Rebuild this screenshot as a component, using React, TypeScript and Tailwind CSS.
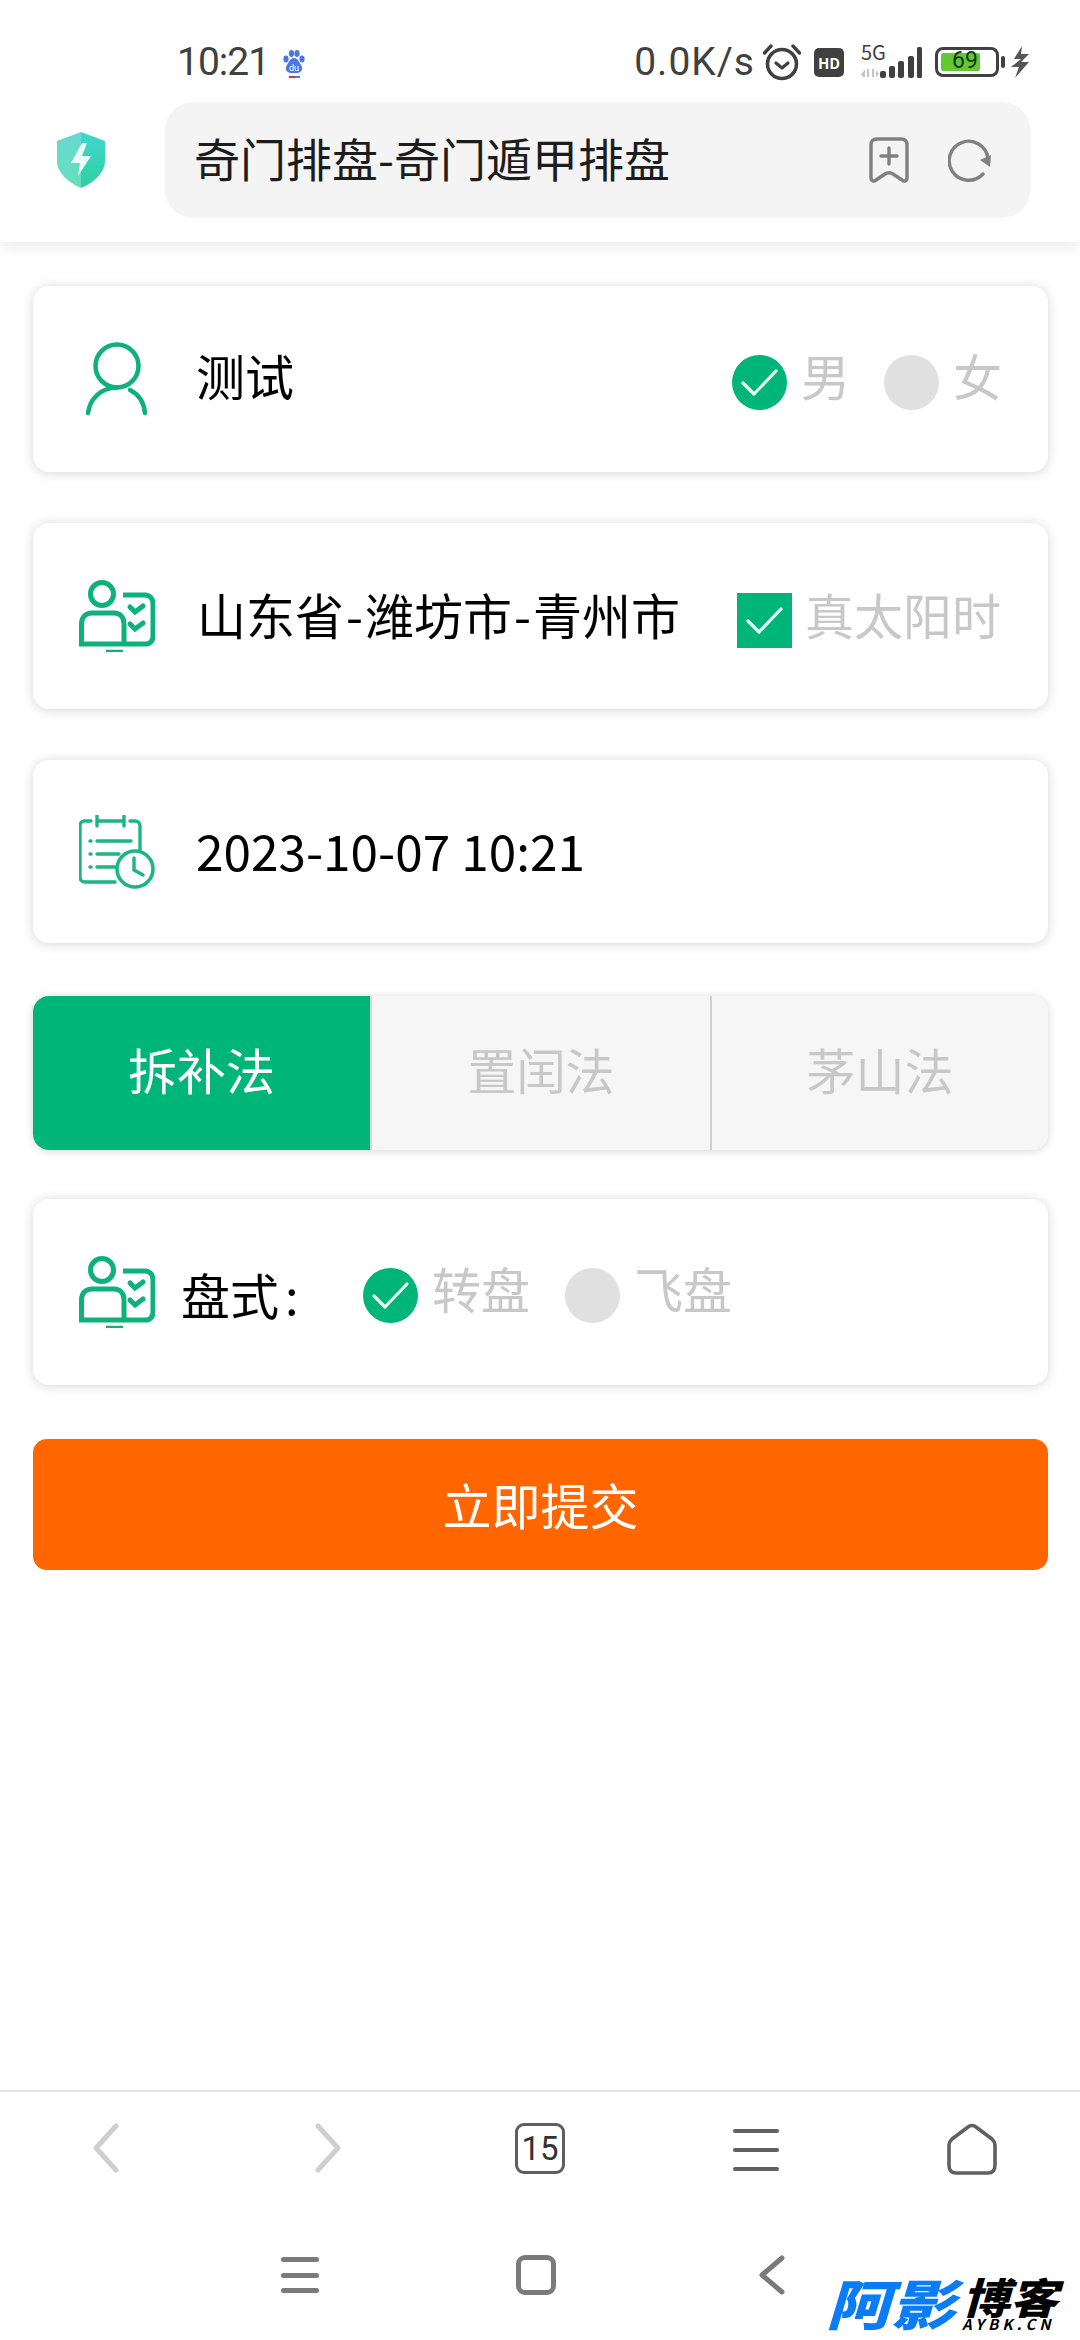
import React from 'react'

const font = { fontFamily: '"Noto Sans CJK SC", "Noto Sans", sans-serif' }

const Check = ({ className }: { className?: string }) => (
  <svg viewBox="0 0 55 55" className={className} fill="none">
    <path d="M11 28 L22 39 L44 16" stroke="#e8fff6" strokeWidth="3.2" strokeLinecap="round" strokeLinejoin="round" />
  </svg>
)

const Radio = ({ on, label }: { on?: boolean; label: string }) => (
  <div className="flex items-center gap-[14px]">
    <span className={on ? 'mt-[6px] block h-[55px] w-[55px] rounded-full bg-[#00b578]' : 'mt-[6px] block h-[55px] w-[55px] rounded-full bg-[#e0e0e0]'}>
      {on && <Check className="h-[55px] w-[55px]" />}
    </span>
    <span className="pb-[9px] text-[49px] leading-none text-[#c8c8c8]">{label}</span>
  </div>
)

const Card = ({ className, children }: { className?: string; children: React.ReactNode }) => (
  <div className={`flex items-center rounded-[16px] bg-white shadow-[0_1px_12px_rgba(0,0,0,0.17)] ${className ?? ''}`}>
    {children}
  </div>
)

const PersonIcon = () => (
  <svg viewBox="0 0 66 74" className="h-[74px] w-[66px]" fill="none" stroke="#0cb27a" strokeWidth="4.5" strokeLinecap="round">
    <circle cx="33" cy="24" r="21.5" />
    <path d="M4 71 C6 56 17 46 33 45.5" />
    <path d="M46 48 C54 52 60 60 61 71" />
  </svg>
)

const PersonCheckIcon = () => (
  <svg viewBox="0 0 76 72" className="h-[72px] w-[76px]" fill="none" stroke="#0cb27a" strokeWidth="5">
    <circle cx="23" cy="14" r="11.5" />
    <path d="M2.5 64 V44 C2.5 37 7 33 13 33 H35 C41 33 45 37 45 44 V64" />
    <path d="M44 15 H66 C71 15 74 19 74 24 V56 C74 61 71 64 66 64 H0" />
    <path d="M51 27 L56 32 L64 26" strokeLinecap="round" />
    <path d="M51 44 L56 49 L64 43" strokeLinecap="round" />
    <path d="M27 71 H44" strokeWidth="2.5" />
  </svg>
)

const CalendarIcon = () => (
  <svg viewBox="0 0 76 74" className="h-[74px] w-[76px]" fill="none" stroke="#1ab684" strokeWidth="3.4" strokeLinecap="round">
    <path d="M12 6 H5 C2 6 1 9 1 11 V62 C1 65 3 67 6 67 H36" />
    <path d="M18 1 V11 M18 6 H44 M45 1 V11 M51 6 H56 C59 6 61 8 61 11 V36" />
    <path d="M18 26 H52 M18 39 H40 M18 52 H36" />
    <path d="M11 26 H12 M11 39 H12 M11 52 H12" />
    <circle cx="56" cy="54" r="18" strokeWidth="3.6" />
    <path d="M55 43 V55 L64 60" />
  </svg>
)

const StatusIcons = () => (
  <div className="flex items-center">
    <svg viewBox="0 0 38 38" className="ml-[8px] h-[38px] w-[38px]" fill="none" stroke="#404040">
      <circle cx="19" cy="21" r="14.5" strokeWidth="3.6" />
      <path d="M13 20 L19 25 L25 20" strokeWidth="3.2" strokeLinecap="round" strokeLinejoin="round" />
      <path d="M1.5 10 L8 3 M36.5 10 L30 3" strokeWidth="3.4" strokeLinecap="round" />
    </svg>
    <span className="ml-[13px] flex h-[29px] w-[30px] items-center justify-center rounded-[5px] bg-[#404040] text-[15px] font-bold leading-none text-white">HD</span>
    <div className="relative ml-[17px] h-[32px] w-[62px]">
      <span className="absolute left-0 top-[-5px] text-[20px] leading-[22px] text-[#404040]">5G</span>
      <svg viewBox="0 0 62 32" className="absolute inset-0 h-[32px] w-[62px]">
        <path d="M0 28 L4 24 V31 H2 Z M6 23 H8 V31 H6 Z" fill="#c4c4c4" />
        <path d="M11 23 H13 V31 H11 Z M15 24 L18 28 L15 31 Z" fill="#c4c4c4" />
        <rect x="19" y="25" width="6" height="7" rx="2" fill="#404040" />
        <rect x="28" y="20" width="6" height="12" rx="2" fill="#404040" />
        <rect x="37" y="15" width="6" height="17" rx="2" fill="#404040" />
        <rect x="47" y="10" width="6" height="22" rx="2" fill="#404040" />
        <rect x="56" y="1" width="5" height="31" rx="1.5" fill="#404040" />
      </svg>
    </div>
    <div className="relative ml-[12px] h-[30px] w-[64px] rounded-[8px] border-[3px] border-[#404040]">
      <div className="ml-[3px] mt-[3px] h-[18px] w-[39px] rounded-[2px] bg-[#64c832]" />
      <span className="absolute left-[14px] top-[-2px] text-[23px] leading-[26px] text-[#11380a]" style={{ fontFamily: 'Roboto, sans-serif' }}>69</span>
    </div>
    <span className="ml-[2px] block h-[12px] w-[4px] rounded-[2px] bg-[#404040]" />
    <svg viewBox="0 0 18 32" className="ml-[6px] h-[32px] w-[18px]">
      <path d="M11 0 L3 13 H10 L0 21 H8 L4 32 L18 16 H10 L18 8 H10 Z" fill="#555555" />
    </svg>
  </div>
)

export default function App() {
  return (
    <div className="relative flex h-[2340px] w-[1080px] flex-col overflow-hidden bg-white" style={font}>
      <header className="relative z-10 h-[242px] bg-white shadow-[0_4px_14px_rgba(0,0,0,0.09)]">
        <div className="flex h-[102px] items-start justify-between pl-[177px] pr-[51px] pt-[38px]">
          <div className="flex items-center">
            <span className="text-[39px] leading-[48px] tracking-[-1px] text-[#404040]" style={{ fontFamily: 'Roboto, sans-serif' }}>10:21</span>
            <svg viewBox="0 0 24 30" className="ml-[13px] mt-[2px] h-[30px] w-[24px]">
              <ellipse cx="4" cy="11" rx="2.6" ry="3.4" fill="#4a78e8" />
              <ellipse cx="9.5" cy="5.5" rx="2.6" ry="3.4" fill="#4a78e8" />
              <ellipse cx="15" cy="5.5" rx="2.6" ry="3.4" fill="#4a78e8" />
              <ellipse cx="20" cy="11" rx="2.6" ry="3.4" fill="#4a78e8" />
              <path d="M12 10 C16 10 17 14 19 17 C22 21 19 25 15 25 H9 C5 25 2 21 5 17 C7 14 8 10 12 10 Z" fill="#4a78e8" />
              <text x="12" y="23" textAnchor="middle" fontSize="9" fill="#ffffff" fontFamily="Roboto, sans-serif">du</text>
              <rect x="7" y="28" width="6" height="2" fill="#c0394b" />
              <rect x="13" y="28" width="5" height="2" fill="#4a78e8" />
            </svg>
          </div>
          <div className="flex items-center">
            <span className="text-[39px] leading-[48px] tracking-[1px] text-[#404040]" style={{ fontFamily: 'Roboto, sans-serif' }}>0.0K/s</span>
            <StatusIcons />
          </div>
        </div>
        <div className="flex items-center pl-[57px] pr-[50px]">
          <svg viewBox="0 0 48 56" className="h-[56px] w-[48px]">
            <defs>
              <linearGradient id="shieldL" x1="0" y1="0" x2="0" y2="1">
                <stop offset="0" stopColor="#66d9d4" />
                <stop offset="1" stopColor="#66e0b8" />
              </linearGradient>
              <linearGradient id="shieldR" x1="0" y1="0" x2="0" y2="1">
                <stop offset="0" stopColor="#40d6cf" />
                <stop offset="1" stopColor="#2fd0a0" />
              </linearGradient>
            </defs>
            <path d="M24 0 L0 9 V29 C0 41 12 51 24 56 Z" fill="url(#shieldL)" />
            <path d="M24 0 L48 9 V29 C48 41 36 51 24 56 Z" fill="url(#shieldR)" />
            <path d="M25 11 L14 31 H23 L21 44 L34 24 H25 L30 11 Z" fill="#eafff8" />
          </svg>
          <div className="ml-[60px] flex h-[116px] flex-1 items-center rounded-[28px] bg-[#f4f4f4] pl-[29px]">
            <span className="pb-[6px] text-[46px] leading-none text-[#1c1c1c]">奇门排盘-奇门遁甲排盘</span>
            <svg viewBox="0 0 40 46" className="ml-auto h-[46px] w-[40px]" fill="none" stroke="#808080" strokeWidth="3.4" strokeLinecap="round" strokeLinejoin="round">
              <path d="M8 2 H32 C36 2 38 4 38 8 V41 C38 44 35 45 33 43 L24 37 C21 35 19 35 16 37 L7 43 C5 45 2 44 2 41 V8 C2 4 4 2 8 2 Z" />
              <path d="M12 19 H28 M20 11 V27" />
            </svg>
            <svg viewBox="0 0 44 44" className="ml-[39px] mr-[38px] h-[44px] w-[44px]" fill="none">
              <path d="M40 20 A19.5 19.5 0 1 0 35 36" stroke="#808080" strokeWidth="3.4" strokeLinecap="round" />
              <path d="M32 22 L43 17 L42 29 Z" fill="#808080" />
            </svg>
          </div>
        </div>
      </header>

      <main className="flex flex-col pl-[33px] pr-[32px] pt-[44px]">
        <Card className="h-[186px] pl-[51px] pr-[46px]">
          <PersonIcon />
          <span className="ml-[46px] pb-[9px] text-[49px] leading-none text-black">测试</span>
          <div className="ml-auto flex items-center gap-[34px]">
            <Radio on label="男" />
            <Radio label="女" />
          </div>
        </Card>

        <Card className="mt-[51px] h-[186px] pl-[46px] pr-[47px]">
          <PersonCheckIcon />
          <span className="ml-[42px] pb-[6px] text-[49px] leading-none text-black">
            山东省<span className="mx-[2px]">-</span>潍坊市<span className="mx-[2px]">-</span>青州市
          </span>
          <div className="ml-auto flex items-center gap-[13px]">
            <span className="mt-[8px] block h-[55px] w-[55px] bg-[#00b578]">
              <Check className="h-[55px] w-[55px]" />
            </span>
            <span className="pb-[6px] text-[49px] leading-none text-[#c8c8c8]">真太阳时</span>
          </div>
        </Card>

        <Card className="mt-[51px] h-[183px] pl-[46px]">
          <CalendarIcon />
          <span className="ml-[41px] pb-[4px] text-[49.5px] leading-none text-black">2023-10-07 10:21</span>
        </Card>

        <div className="mt-[53px] flex h-[154px] overflow-hidden rounded-[16px] shadow-[0_1px_8px_rgba(0,0,0,0.17)]">
          <div className="flex w-[337px] items-center justify-center bg-[#00b578] pb-[8px] text-[49px] text-white">拆补法</div>
          <div className="flex w-[340px] items-center justify-center border-l-2 border-[#d8d8d8] bg-[#f6f6f6] pb-[8px] text-[49px] text-[#c8c8c8]">置闰法</div>
          <div className="flex flex-1 items-center justify-center border-l-2 border-[#cfcfcf] bg-[#f6f6f6] pb-[8px] text-[49px] text-[#c8c8c8]">茅山法</div>
        </div>

        <Card className="mt-[49px] h-[186px] pl-[46px]">
          <PersonCheckIcon />
          <span className="ml-[26px] mt-[2px] flex w-[119px] text-[49px] leading-none text-black">
            盘式<span className="ml-[6px]">:</span>
          </span>
          <div className="ml-[63px] flex items-center gap-[35px]">
            <Radio on label="转盘" />
            <Radio label="飞盘" />
          </div>
        </Card>

        <button className="mt-[54px] h-[131px] rounded-[14px] bg-[#ff6600] pb-[2px] text-[49px] text-white">立即提交</button>
      </main>

      <footer className="mt-auto">
        <nav className="flex h-[120px] items-start border-t-2 border-[#e6e6e6] pt-[31px]">
          <div className="flex w-[216px] justify-center pr-[4px]">
            <svg viewBox="0 0 26 50" className="h-[50px] w-[26px]" fill="none" stroke="#cfcfcf" strokeWidth="5" strokeLinecap="round" strokeLinejoin="round">
              <path d="M23 3 L3 25 L23 47" />
            </svg>
          </div>
          <div className="flex w-[216px] justify-center pl-[8px]">
            <svg viewBox="0 0 26 50" className="h-[50px] w-[26px]" fill="none" stroke="#cfcfcf" strokeWidth="5" strokeLinecap="round" strokeLinejoin="round">
              <path d="M3 3 L23 25 L3 47" />
            </svg>
          </div>
          <div className="flex w-[216px] justify-center">
            <span className="flex h-[51px] w-[50px] items-center justify-center rounded-[9px] border-[3px] border-[#5e5e5e] text-[33px] leading-none text-[#333333]" style={{ fontFamily: 'Roboto, sans-serif' }}>15</span>
          </div>
          <div className="flex w-[216px] justify-center pt-[6px]">
            <div className="flex h-[42px] w-[46px] flex-col justify-between">
              <span className="block h-[4px] rounded-full bg-[#606060]" />
              <span className="block h-[4px] rounded-full bg-[#606060]" />
              <span className="block h-[4px] rounded-full bg-[#606060]" />
            </div>
          </div>
          <div className="flex w-[216px] justify-center">
            <svg viewBox="0 0 50 52" className="h-[52px] w-[50px]" fill="none" stroke="#606060" strokeWidth="3.6" strokeLinejoin="round">
              <path d="M21 4 C23 2 27 2 29 4 L45 16 C47 18 48 20 48 22 V42 C48 47 46 50 41 50 H9 C4 50 2 47 2 42 V22 C2 20 3 18 5 16 Z" />
            </svg>
          </div>
        </nav>
        <nav className="flex h-[130px] items-start pl-[182px] pt-[45px]">
          <div className="flex w-[236px] justify-center pt-[2px]">
            <div className="flex h-[36px] w-[38px] flex-col justify-between">
              <span className="block h-[5px] rounded-full bg-[#7a7a7a]" />
              <span className="block h-[5px] rounded-full bg-[#7a7a7a]" />
              <span className="block h-[5px] rounded-full bg-[#7a7a7a]" />
            </div>
          </div>
          <div className="flex w-[236px] justify-center">
            <span className="block h-[40px] w-[40px] rounded-[9px] border-[5px] border-[#7a7a7a]" />
          </div>
          <div className="flex w-[236px] justify-center">
            <svg viewBox="0 0 26 40" className="h-[40px] w-[26px]" fill="none" stroke="#7a7a7a" strokeWidth="5" strokeLinecap="round" strokeLinejoin="round">
              <path d="M23 3 L3 20 L23 37" />
            </svg>
          </div>
        </nav>
      </footer>

      <div className="absolute left-[826px] top-[2275px] flex items-start italic">
        <span className="block w-[136px] origin-left scale-x-[1.2] text-[54px] font-black leading-[54px] text-[#0a7cf5]">阿影</span>
        <div className="flex w-[96px] flex-col">
          <span className="block origin-left scale-x-[1.14] text-[42px] font-black leading-[42px] text-black">博客</span>
          <span className="text-[15px] font-bold leading-[13px] tracking-[4px] text-black">AYBK.CN</span>
        </div>
      </div>
    </div>
  )
}
